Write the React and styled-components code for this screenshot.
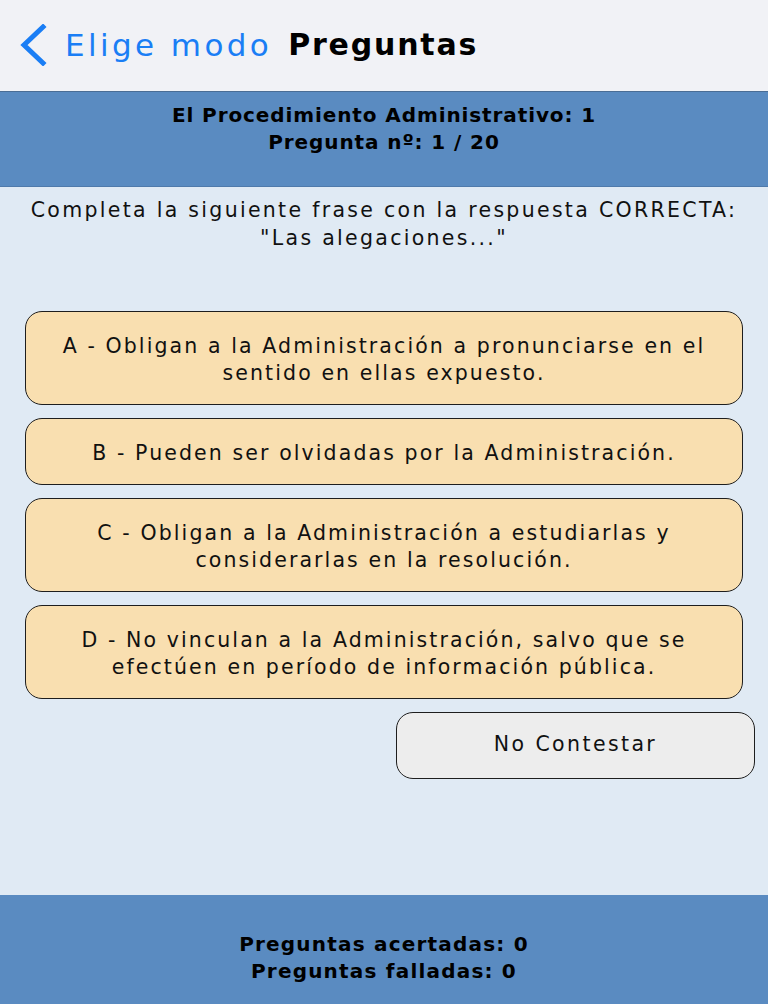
import React from 'react'
import styled, { createGlobalStyle } from 'styled-components'

const Global = createGlobalStyle`
  html, body { margin: 0; padding: 0; }
  body { font-family: "DejaVu Sans", "Liberation Sans", sans-serif; }
`

const answers = [
  { letter: 'A', text: 'Obligan a la Administración a pronunciarse en el sentido en ellas expuesto.', lines: 2 },
  { letter: 'B', text: 'Pueden ser olvidadas por la Administración.', lines: 1 },
  { letter: 'C', text: 'Obligan a la Administración a estudiarlas y considerarlas en la resolución.', lines: 2 },
  { letter: 'D', text: 'No vinculan a la Administración, salvo que se efectúen en período de información pública.', lines: 2 },
]

function App() {
  return (
    <Screen>
      <Global />
      <NavBar>
        <Back>
          <svg width="30" height="42" viewBox="0 0 30 42">
            <path d="M25 3 L6 21 L25 39" fill="none" stroke="#1a7ef5" strokeWidth="5" strokeLinecap="square" />
          </svg>
          <span>Elige modo</span>
        </Back>
        <Title>Preguntas</Title>
      </NavBar>
      <Band>
        <div>El Procedimiento Administrativo: 1</div>
        <div>Pregunta nº: 1 / 20</div>
      </Band>
      <Content>
        <Question>
          Completa la siguiente frase con la respuesta CORRECTA:
          <br />
          "Las alegaciones..."
        </Question>
        <Answers>
          {answers.map(a => (
            <Answer key={a.letter} $tall={a.lines > 1}>
              {a.letter} - {a.text}
            </Answer>
          ))}
        </Answers>
        <SkipRow>
          <Skip>No Contestar</Skip>
        </SkipRow>
      </Content>
      <Footer>
        <div>Preguntas acertadas: 0</div>
        <div>Preguntas falladas: 0</div>
      </Footer>
    </Screen>
  )
}

const Screen = styled.div`
  width: 768px;
  height: 1004px;
  display: flex;
  flex-direction: column;
  background: #e0eaf4;
  overflow: hidden;
`

const NavBar = styled.div`
  height: 92px;
  flex-shrink: 0;
  box-sizing: border-box;
  background: #f1f2f6;
  border-bottom: 1px solid #4a6d95;
  display: flex;
  align-items: center;
  padding: 0 0 2px 18px;
  gap: 16px;
`

const Back = styled.div`
  display: flex;
  align-items: center;
  gap: 17px;
  color: #1a7ef5;
  font-size: 31px;
  letter-spacing: 3.4px;
`

const Title = styled.div`
  font-size: 30px;
  font-weight: bold;
  color: #000;
  letter-spacing: 1.8px;
`

const Band = styled.div`
  height: 95px;
  flex-shrink: 0;
  box-sizing: border-box;
  background: #5a8bc1;
  border-bottom: 1px solid #4f7aab;
  padding-top: 10px;
  text-align: center;
  font-weight: bold;
  font-size: 20px;
  letter-spacing: 0.9px;
  line-height: 27px;
  color: #000;
`

const Content = styled.div`
  flex: 1;
  display: flex;
  flex-direction: column;
  padding: 9px 0 0;
`

const Question = styled.div`
  text-align: center;
  font-size: 20.5px;
  letter-spacing: 2.3px;
  line-height: 28px;
  color: #111;
`

const Answers = styled.div`
  display: flex;
  flex-direction: column;
  gap: 13px;
  margin: 59px 25px 0;
`

const Answer = styled.div`
  box-sizing: border-box;
  height: ${p => (p.$tall ? '94px' : '67px')};
  background: #f9dfb0;
  border: 1.5px solid #1e1e1e;
  border-radius: 17px;
  display: flex;
  align-items: center;
  justify-content: center;
  text-align: center;
  padding: 3px 24px 0;
  font-size: 20.5px;
  letter-spacing: 2.1px;
  line-height: 27px;
  color: #111;
`

const SkipRow = styled.div`
  display: flex;
  justify-content: flex-end;
  padding: 13px 13px 0;
`

const Skip = styled.div`
  box-sizing: border-box;
  width: 359px;
  height: 67px;
  background: #ededed;
  border: 1.5px solid #1e1e1e;
  border-radius: 17px;
  display: flex;
  align-items: center;
  justify-content: center;
  padding-bottom: 3px;
  font-size: 20.5px;
  letter-spacing: 2.4px;
  color: #111;
`

const Footer = styled.div`
  height: 109px;
  flex-shrink: 0;
  box-sizing: border-box;
  background: #5a8bc1;
  padding-top: 36px;
  text-align: center;
  font-weight: bold;
  font-size: 20px;
  letter-spacing: 1.2px;
  line-height: 27px;
  color: #000;
`

export default App
